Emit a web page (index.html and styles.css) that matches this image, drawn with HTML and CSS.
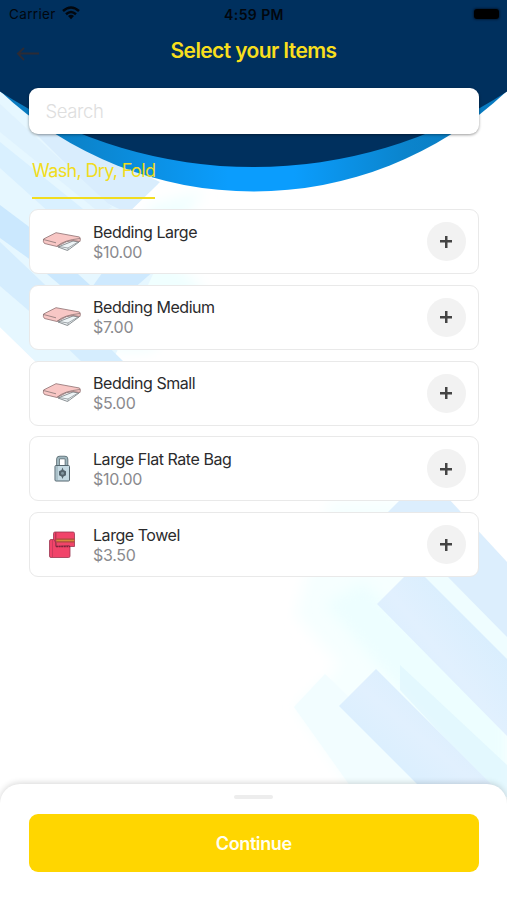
FILE: index.html
```html
<!DOCTYPE html>
<html lang="en">
<head>
<meta charset="utf-8">
<title>Select your Items</title>
<link rel="stylesheet" href="styles.css">
</head>
<body>
<svg width="0" height="0" class="defs" aria-hidden="true">
  <symbol id="bedding" viewBox="0 0 40 24">
    <path d="M16 17 31 11 37 12 25.500 20.500Z" fill="#eef4f6" stroke="#71777b" stroke-width=".8" stroke-linejoin="round"/>
    <path d="M17 16.500 26 18 36 12M26 18V20" fill="none" stroke="#7f878b" stroke-width=".7"/>
    <path d="M1.500 9 14 2.700 37.500 7Q39 8 38 11.500L31 10.500Q23 11.500 21 13.500L15 16.500 2.500 13.500Q.8 12 1.500 9Z" fill="#f8c7c5" stroke="#8e6f70" stroke-width=".8" stroke-linejoin="round"/>
    <path d="M1.500 9.500 14 12.800M15 16.300Q22 10 38 8.500" fill="none" stroke="#7a6869" stroke-width=".7"/>
  </symbol>
  <symbol id="bag" viewBox="0 0 18 28">
    <path d="M5 11V4.500Q5 2.500 7 2.500h4.500q2 0 2 2V11" fill="none" stroke="#586970" stroke-width="3.600"/>
    <path d="M5 11V4.500Q5 2.500 7 2.500h4.500q2 0 2 2V11" fill="none" stroke="#9fb6bd" stroke-width="2"/>
    <rect x="2" y="10.500" width="14.500" height="15.500" rx="1" fill="#c4d9e2" stroke="#53656e"/>
    <path d="M4 11v14.500" stroke="#879ca5" stroke-width=".8"/>
    <path d="m9.500 12.500 1 2.500 2.500 1.200v4L10.500 21.500l-1 2.500-1-2.500L6 20.200v-4L8.500 15Z" fill="#53636c"/>
    <circle cx="9.500" cy="18.200" r="1.500" fill="#8297a1"/>
  </symbol>
  <symbol id="towel" viewBox="0 0 28 28">
    <path d="M3 8.500h19V25q0 1.500-1.500 1.500H3Q1.500 26.500 1.500 25V10Q1.500 8.500 3 8.500Z" fill="#f1446a" stroke="#9a3650" stroke-width=".8"/>
    <path d="M4.500 9v17" stroke="#c43a5a" stroke-width=".8"/>
    <path d="M7 1h18q1.500 0 1.500 1.500V15.500H22L21 14.500 8 15.500V12L5.500 8V2.500Q5.500 1 7 1Z" fill="#f1446a" stroke="#9a3650" stroke-width=".8"/>
    <path d="M7.800 1.500v14" stroke="#94304a" stroke-width=".9"/>
    <path d="M8.300 7.500h18v4h-18z" fill="#a94b3d"/>
    <path d="M8.300 9.500h18" stroke="#d58c3b" stroke-width="1.500"/>
    <path d="M8 15.500h14" stroke="#7d233b" stroke-width="1.400" stroke-dasharray="2 .6"/>
  </symbol>
</svg>

<div class="screen">
  <svg class="backdrop" viewBox="0 0 507 900" aria-hidden="true">
    <defs>
      <linearGradient id="rim" x1="0" x2="507" y1="0" y2="0" gradientUnits="userSpaceOnUse">
        <stop offset="0" stop-color="#0878bd"/><stop offset=".16" stop-color="#0b84cc"/>
        <stop offset=".45" stop-color="#0b9dfd"/><stop offset=".58" stop-color="#0b9dfd"/>
        <stop offset=".8" stop-color="#0b84cc"/><stop offset="1" stop-color="#0878bd"/>
      </linearGradient>
      <filter id="soft" x="-20%" y="-20%" width="140%" height="140%"><feGaussianBlur stdDeviation="7"/></filter>
      <linearGradient id="band" x1="0" x2="1" y1="1" y2="0">
        <stop offset="0" stop-color="#d1edfe"/><stop offset=".5" stop-color="#e1f0fe"/><stop offset="1" stop-color="#d1ecfd"/>
      </linearGradient>
    </defs>
    <g>
      <path d="M150 205 205 190 160 250 205 290 150 350 110 350Z" fill="#f0ffff" filter="url(#soft)"/>
      <path d="M0 88 62 130 158 184 128 213 155 270 112 362H36L0 327Z" fill="#e6f7ff"/>
      <path d="M62 134 160 182 128 213 104 202 36 134Z" fill="#d9edfd"/>
      <path d="M0 104 112 207 100 213 0 132Z" fill="#dff2fe"/>
      <path d="M0 142 88 213H50L0 168Z" fill="#d9f0ff"/>
      <path d="M0 205 28 226 78 274 90 285H60L28 258 0 238Z" fill="#cbe8fe"/>
      <path d="M110 262 155 270 132 290H90Z" fill="#cee9fe"/>
      <path d="M0 242 40 280 124 362H82L28 310 0 286Z" fill="#d5edfe"/>
      <path d="M0 292 36 324 72 362H36L0 327Z" fill="#e6f7ff"/>
    </g>
    <g>
      <path d="M330 500 400 500 507 607V800H360L295 707 340 665 295 615Z" fill="#f6ffff" filter="url(#soft)"/>
      <path d="M294 707 325 674 450 797H358Z" fill="#f2fdff"/>
      <path d="M325 604 363 582 507 716V797L482 785Z" fill="#edfeff" filter="url(#soft)"/>
      <path d="M387 513 415 485H436L507 562V642Z" fill="#dceefd"/>
      <path d="M424 577H448L507 637V660Z" fill="#effdff"/>
      <path d="M377 604 405 576H424L507 659V736Z" fill="url(#band)"/>
      <path d="M400 665 507 765V797H500L400 690Z" fill="#dcf4fe" opacity=".6"/>
      <path d="M339 706 376 669 492 785V797H430Z" fill="url(#band)"/>
    </g>
    <path d="M0 0H507V91A370 370 0 0 1 0 91Z" fill="url(#rim)"/>
    <path d="M0 0H507V91.500A463 463 0 0 1 0 91.500Z" fill="#00305e"/>
  </svg>

  <header class="status">
    <div class="carrier"><span>Carrier</span>
      <svg width="18" height="14" viewBox="0 0 18 14"><path d="M1 5Q9-2 17 5M4 8.200Q9 3.800 14 8.200" fill="none" stroke="#02070e" stroke-width="2.500"/><path d="M6 10Q9 7.500 12 10L9 13.300Z" fill="#02070e"/></svg>
    </div>
    <time>4:59 PM</time>
    <div class="power"><i class="battery"></i></div>
  </header>
  <div class="nav">
    <svg class="back" width="26" height="16" viewBox="0 0 26 16"><path d="M24 7.500H3M9 2 3 7.500 9 14" fill="none" stroke="#2b2b35" stroke-width="2"/></svg>
    <h1>Select your Items</h1>
  </div>
  <main>
    <div class="search">Search</div>
    <div class="tabs"><span class="tab">Wash, Dry, Fold</span></div>
    <ul class="items">
      <li class="item"><div class="thumb"><svg width="40" height="24"><use href="#bedding"/></svg></div><div class="info"><div class="name">Bedding Large</div><div class="price">$10.00</div></div><div class="add"></div></li>
      <li class="item"><div class="thumb"><svg width="40" height="24"><use href="#bedding"/></svg></div><div class="info"><div class="name">Bedding Medium</div><div class="price">$7.00</div></div><div class="add"></div></li>
      <li class="item"><div class="thumb"><svg width="40" height="24"><use href="#bedding"/></svg></div><div class="info"><div class="name">Bedding Small</div><div class="price">$5.00</div></div><div class="add"></div></li>
      <li class="item"><div class="thumb"><svg width="18" height="28"><use href="#bag"/></svg></div><div class="info"><div class="name">Large Flat Rate Bag</div><div class="price">$10.00</div></div><div class="add"></div></li>
      <li class="item"><div class="thumb"><svg width="28" height="28"><use href="#towel"/></svg></div><div class="info"><div class="name">Large Towel</div><div class="price">$3.50</div></div><div class="add"></div></li>
    </ul>
  </main>
  <footer class="sheet">
    <div class="grip"></div>
    <div class="continue">Continue</div>
  </footer>
</div>
</body>
</html>
```
FILE: styles.css
```css
* { box-sizing: border-box; }
body { margin: 0; font-family: Inter, "Liberation Sans", sans-serif; background: #fff; }
.defs { position: absolute; }
.screen { position: relative; width: 507px; height: 900px; overflow: hidden; display: flex; flex-direction: column; isolation: isolate; }
.backdrop { position: absolute; inset: 0; width: 507px; height: 900px; z-index: -1; }

.status { height: 28px; padding: 0 8px 0 9px; display: grid; grid-template-columns: 1fr auto 1fr; align-items: center; font-size: 13.5px; color: #02070e; }
.carrier { display: flex; align-items: center; gap: 6px; letter-spacing: .35px; }
.status time { font-weight: 600; font-size: 14px; letter-spacing: .4px; }
.carrier svg { margin-top: -2px; }
.power { display: flex; justify-content: flex-end; margin-top: -1px; }
.battery { width: 25px; height: 10px; border-radius: 3px; background: #000; box-shadow: 0 0 2px 1px #001c39; }

.nav { height: 60px; display: grid; grid-template-columns: 1fr auto 1fr; align-items: start; }
.back { margin: 18px 0 0 15px; }
.nav h1 { grid-column: 2; margin: 10px 0 0; font-size: 21px; line-height: 26px; font-weight: 600; letter-spacing: -.62px; color: #f8df1d; }

main { flex: 1; padding: 0 28px 0 28.5px; }
.search { height: 46px; padding: 0 17px; border-radius: 9px; background: #fff; font-size: 18.5px; font-weight: 300; line-height: 47px; letter-spacing: -.4px; color: #dedede; box-shadow: 0 1px 3px rgba(0,0,0,.4); }
.tabs { height: 75px; padding: 22px 3.5px 0; }
.tab { display: inline-block; height: 43px; border-bottom: 2px solid #f1dc20; font-size: 18px; font-weight: 400; line-height: 30px; letter-spacing: -.65px; color: #f1dc20; white-space: nowrap; }
.items { list-style: none; margin: 0; padding: 0; display: grid; gap: 10.750px; }
.item { height: 65px; display: flex; align-items: center; border: 1.500px solid #e9e9e9; border-radius: 9px; background: #fff; padding: 0 12.500px 0 11.500px; }
.thumb { width: 42px; display: flex; justify-content: center; }
.info { flex: 1; margin-left: 10px; font-size: 16px; line-height: 20px; white-space: nowrap; }
.name { color: #2b2b2d; letter-spacing: -.45px; }
.price { color: #8a8a8e; letter-spacing: -.3px; }
.add { width: 39px; height: 39px; border-radius: 50%; background: linear-gradient(#444,#444) center/12px 2.500px no-repeat, linear-gradient(#444,#444) center/2.500px 12px no-repeat, #f2f2f2; }

.sheet { height: 116px; padding: 11px 28px 0 28.500px; border-radius: 20px 20px 0 0; background: #fff; box-shadow: 0 -1px 6px rgba(0,0,0,.16); }
.grip { width: 39px; height: 4px; border-radius: 2px; background: #ededed; margin: 0 auto 15px; }
.continue { height: 58px; border-radius: 9px; background: #ffd600; color: #fffef2; text-align: center; font-size: 18px; line-height: 59px; font-weight: 600; letter-spacing: -.4px; }
```
